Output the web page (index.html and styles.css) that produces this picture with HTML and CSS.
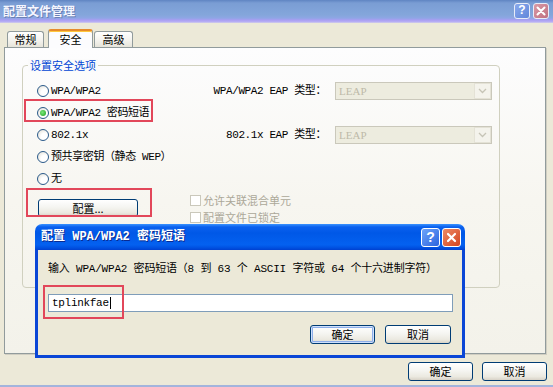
FILE: index.html
```html
<!DOCTYPE html>
<html lang="zh-CN">
<head>
<meta charset="utf-8">
<title>配置文件管理</title>
<link rel="stylesheet" href="styles.css">
</head>
<body>
<div class="win">
  <div class="titlebar">
    <span class="title">配置文件管理</span>
    <div class="tb-btns">
      <span class="tbb help">?</span>
      <span class="tbb close"><svg width="10" height="10" viewBox="0 0 10 10"><path d="M1.5 1.5 L8.5 8.5 M8.5 1.5 L1.5 8.5" stroke="#fff" stroke-width="2" stroke-linecap="round"/></svg></span>
    </div>
  </div>

  <div class="tabs">
    <div class="tab">常规</div>
    <div class="tab active">安全</div>
    <div class="tab t3">高级</div>
  </div>

  <div class="panel">
    <div class="group">
      <div class="legend">设置安全选项</div>
      <div class="grid">
        <div class="radio row1"><span class="rb"></span>WPA/WPA2</div>
        <div class="lbl row1">WPA/WPA2 EAP 类型：</div>
        <div class="dd row1"><span>LEAP</span><span class="arrow"><svg width="9" height="6" viewBox="0 0 9 6"><path d="M1 1 L4.5 4.5 L8 1" fill="none" stroke="#c6c4b6" stroke-width="1.3"/></svg></span></div>
        <div class="radio row2"><span class="rb on"></span>WPA/WPA2 密码短语</div>
        <div class="radio row3"><span class="rb"></span>802.1x</div>
        <div class="lbl row3">802.1x EAP 类型：</div>
        <div class="dd row3"><span>LEAP</span><span class="arrow"><svg width="9" height="6" viewBox="0 0 9 6"><path d="M1 1 L4.5 4.5 L8 1" fill="none" stroke="#c6c4b6" stroke-width="1.3"/></svg></span></div>
        <div class="radio row4"><span class="rb"></span>预共享密钥（静态 WEP）</div>
        <div class="radio row5"><span class="rb"></span>无</div>
      </div>
      <div class="lower">
        <button class="btn cfg">配置...</button>
        <div class="checks">
          <div class="chk"><span class="cb"></span>允许关联混合单元</div>
          <div class="chk"><span class="cb"></span>配置文件已锁定</div>
        </div>
      </div>
    </div>
  </div>

  <div class="footer">
    <button class="btn fbtn">确定</button>
    <button class="btn fbtn">取消</button>
  </div>

  <div class="dlg">
    <div class="dlg-title">
      <span class="dt">配置 WPA/WPA2 密码短语</span>
      <div class="tb-btns dbtns">
        <span class="tbb dhelp">?</span>
        <span class="tbb dclose"><svg width="11" height="11" viewBox="0 0 11 11"><path d="M2 2 L9 9 M9 2 L2 9" stroke="#fff" stroke-width="2.2" stroke-linecap="round"/></svg></span>
      </div>
    </div>
    <div class="dlg-body">
      <div class="prompt">输入 WPA/WPA2 密码短语（8 到 63 个 ASCII 字符或 64 个十六进制字符）</div>
      <div class="inp">tplinkfae<span class="caret"></span></div>
      <div class="dlg-btns">
        <button class="btn dbtn def">确定</button>
        <button class="btn dbtn">取消</button>
      </div>
    </div>
  </div>

  <div class="mark m1"></div>
  <div class="mark m2"></div>
  <div class="mark m3"></div>
</div>
</body>
</html>
```

FILE: styles.css
```css
html, body {
  margin: 0;
  padding: 0;
  background: #ece9d8;
}

.win {
  position: relative;
  width: 553px;
  height: 387px;
  box-sizing: border-box;
  overflow: hidden;
  background: #ece9d8;
  border-bottom: 2px solid #a3b4dc;
  font-family: "Liberation Mono", "Noto Sans CJK SC", monospace;
  font-size: 11px;
  line-height: 13px;
  letter-spacing: -0.4px;
  color: #000;
}

/* ---------- outer title bar (inactive) ---------- */
.titlebar {
  height: 23px;
  box-sizing: border-box;
  display: flex;
  align-items: center;
  justify-content: space-between;
  padding: 0 4px 2px 3px;
  background: linear-gradient(#5f84c2 0, #7a9dd4 3px, #84a6db 15px, #8ea6e4 18px, #a99ef2 20px, #b9b0f4 22px, #d8d5e6 23px);
}

.title {
  font-family: "Noto Sans CJK SC", sans-serif;
  font-weight: bold;
  font-size: 12px;
  line-height: 14px;
  letter-spacing: 0;
  color: #f4f6ff;
  text-shadow: 1px 1px 0 #6a7fb4;
}

.tb-btns {
  display: flex;
  gap: 3px;
}

.tbb {
  width: 16px;
  height: 16px;
  box-sizing: border-box;
  border: 1px solid #e8ecf8;
  border-radius: 3px;
  display: flex;
  align-items: center;
  justify-content: center;
  color: #fff;
  font-family: "Liberation Sans", sans-serif;
  font-weight: bold;
  font-size: 12px;
  letter-spacing: 0;
}

.help {
  background: linear-gradient(135deg, #8aa9ec, #5f86da);
}

.close {
  background: linear-gradient(135deg, #d99aa6, #c07080);
}

/* ---------- tabs ---------- */
.tabs {
  position: relative;
  z-index: 1;
  display: flex;
  align-items: flex-end;
  height: 18px;
  margin-top: 6px;
  padding-left: 7px;
}

.tab {
  width: 37px;
  height: 16px;
  box-sizing: border-box;
  border: 1px solid #919b9c;
  border-bottom: 0;
  border-radius: 3px 3px 0 0;
  background: linear-gradient(#ffffff, #f4f3ee 55%, #e6e4da);
  display: flex;
  align-items: center;
  justify-content: center;
  font-family: "Noto Sans CJK SC", sans-serif;
  font-size: 11px;
  letter-spacing: 0;
  color: #000;
}

.tab.active {
  width: 45px;
  height: 19px;
  margin: 0 1px -1px 4px;
  border-top: 2px solid #e68b2c;
  box-shadow: inset 0 1px 0 #ffc73c;
  background: #fcfcfe;
}

.tab.t3 {
  width: 39px;
}

/* ---------- tab panel ---------- */
.panel {
  margin-left: 4px;
  width: 542px;
  height: 307px;
  box-sizing: border-box;
  border: 1px solid #919b9c;
  box-shadow: 1px 1px 0 #d0cec2;
  background: linear-gradient(#fdfdfe, #f7f6f0 50%, #f3f2ea);
  padding: 17px 0 0 17px;
}

.group {
  width: 478px;
  height: 223px;
  box-sizing: border-box;
  border: 1px solid #d0d0bf;
  border-radius: 4px;
  padding: 0 7px 0 14px;
}

.legend {
  display: inline-block;
  margin: -7px 0 0 -9px;
  padding: 0 2px;
  background: #fbfbfb;
  color: #0046d5;
  font-family: "Noto Sans CJK SC", sans-serif;
  letter-spacing: 0;
  vertical-align: top;
}

.grid {
  display: grid;
  grid-template-columns: 160px 120px 157px;
  grid-template-rows: repeat(5, 22px);
  column-gap: 9px;
  align-items: center;
  margin-top: 1px;
}

.row1 { grid-row: 1; }
.row2 { grid-row: 2; }
.row3 { grid-row: 3; }
.row4 { grid-row: 4; }
.row5 { grid-row: 5; }

.radio {
  grid-column: 1;
  display: flex;
  align-items: center;
  white-space: nowrap;
}

.rb {
  position: relative;
  width: 12px;
  height: 12px;
  box-sizing: border-box;
  border: 1px solid #2a5a8a;
  border-radius: 50%;
  background: radial-gradient(circle at 65% 65%, #ffffff 35%, #dddbd0 100%);
  margin-right: 2px;
  flex: none;
}

.rb.on::after {
  content: "";
  position: absolute;
  left: 2px;
  top: 2px;
  width: 6px;
  height: 6px;
  border-radius: 50%;
  background: radial-gradient(circle at 40% 40%, #7ae87a, #1f9e1f);
}

.lbl {
  grid-column: 2;
  justify-self: end;
  white-space: nowrap;
}

.dd {
  grid-column: 3;
  height: 18px;
  box-sizing: border-box;
  border: 1px solid #cac8bb;
  background: #edecdf;
  display: flex;
  align-items: center;
  justify-content: space-between;
  padding-left: 3px;
  font-family: "Liberation Serif", serif;
  font-size: 11px;
  letter-spacing: 0;
  color: #bdbaa9;
}

.arrow {
  width: 17px;
  height: 16px;
  box-sizing: border-box;
  border: 1px solid #e4e2d6;
  background: #f4f3ec;
  display: flex;
  align-items: center;
  justify-content: center;
}

.lower {
  display: flex;
  align-items: flex-start;
}

.btn {
  box-sizing: border-box;
  margin: 0;
  padding: 0;
  border: 1px solid #003c74;
  border-radius: 3px;
  background: linear-gradient(#ffffff, #f5f5f1 45%, #ebe9e0 80%, #d8d3c7);
  display: flex;
  align-items: center;
  justify-content: center;
  font-family: "Noto Sans CJK SC", sans-serif;
  font-size: 11px;
  line-height: 13px;
  letter-spacing: 0;
  color: #000;
}

.cfg {
  width: 100px;
  height: 18px;
  margin: 9px 0 0 1px;
}

.checks {
  margin: 2px 0 0 52px;
}

.chk {
  height: 17px;
  display: flex;
  align-items: center;
  color: #aca899;
  font-family: "Noto Sans CJK SC", sans-serif;
  letter-spacing: 0;
}

.cb {
  width: 11px;
  height: 11px;
  box-sizing: border-box;
  border: 1px solid #cac8bb;
  background: #fff;
  margin-right: 2px;
}

/* ---------- footer ---------- */
.footer {
  display: flex;
  justify-content: flex-end;
  gap: 9px;
  padding: 8px 6px 0 0;
}

.fbtn {
  width: 65px;
  height: 19px;
}

/* ---------- inner dialog ---------- */
.dlg {
  position: absolute;
  left: 35px;
  top: 224px;
  width: 430px;
  height: 134px;
  display: flex;
  flex-direction: column;
  z-index: 2;
}

.dlg-title {
  height: 26px;
  box-sizing: border-box;
  border-radius: 7px 7px 0 0;
  background: linear-gradient(#3a93ff 0, #0a60ee 3px, #0058e7 35%, #0461f0 80%, #0050e0 92%, #0040d0 100%);
  display: flex;
  align-items: center;
  justify-content: space-between;
  padding: 0 4px 0 6px;
}

.dt {
  font-family: "Liberation Mono", "Noto Sans CJK SC", monospace;
  font-weight: bold;
  font-size: 12px;
  letter-spacing: 0;
  color: #fff;
  text-shadow: 1px 1px 0 #0a2a90;
}

.dbtns {
  gap: 2px;
}

.dhelp,
.dclose {
  width: 19px;
  height: 19px;
  border-color: #fff;
  font-size: 14px;
}

.dhelp {
  background: linear-gradient(135deg, #6ea4fa, #2b63de);
}

.dclose {
  background: linear-gradient(135deg, #ee8a66, #d2441e);
}

.dlg-body {
  flex: 1;
  background: #ece9d8;
  border: 3px solid #0a46d6;
  border-top: 0;
  padding: 12px 9px 0 10px;
}

.prompt {
  line-height: 14px;
  white-space: nowrap;
  letter-spacing: -0.2px;
}

.inp {
  margin-top: 18px;
  height: 18px;
  box-sizing: border-box;
  border: 1px solid #7f9db9;
  background: #fff;
  display: flex;
  align-items: center;
  padding-left: 3px;
  letter-spacing: -0.3px;
}

.caret {
  width: 1px;
  height: 12px;
  background: #000;
  margin-left: 1px;
}

.dlg-btns {
  display: flex;
  justify-content: flex-end;
  gap: 10px;
  margin-top: 13px;
  padding-right: 2px;
}

.dbtn {
  width: 66px;
  height: 19px;
}

.dbtn.def {
  width: 65px;
  box-shadow: inset 0 0 0 1px #cfe0fc, inset 0 0 0 2px #8eaee9;
}

/* ---------- red annotation boxes ---------- */
.mark {
  position: absolute;
  z-index: 3;
  box-sizing: border-box;
  border: 2px solid #e2475a;
}

.m1 { left: 24px; top: 99px; width: 129px; height: 23px; }
.m2 { left: 26px; top: 188px; width: 126px; height: 29px; }
.m3 { left: 43px; top: 285px; width: 81px; height: 34px; }
```
